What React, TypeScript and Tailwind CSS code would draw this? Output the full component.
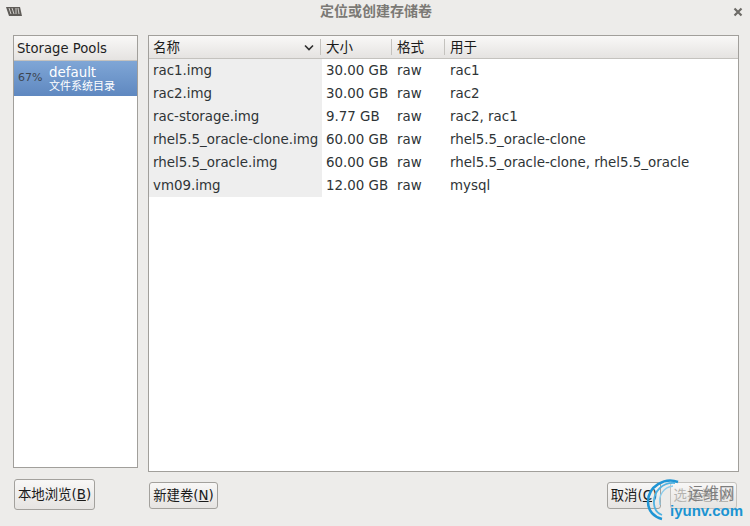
import React from "react";

const font = { fontFamily: '"DejaVu Sans", "Noto Sans CJK SC", sans-serif' };

const volumes = [
  { name: "rac1.img", size: "30.00 GB", format: "raw", usedBy: "rac1" },
  { name: "rac2.img", size: "30.00 GB", format: "raw", usedBy: "rac2" },
  { name: "rac-storage.img", size: "9.77 GB", format: "raw", usedBy: "rac2, rac1" },
  { name: "rhel5.5_oracle-clone.img", size: "60.00 GB", format: "raw", usedBy: "rhel5.5_oracle-clone" },
  { name: "rhel5.5_oracle.img", size: "60.00 GB", format: "raw", usedBy: "rhel5.5_oracle-clone, rhel5.5_oracle" },
  { name: "vm09.img", size: "12.00 GB", format: "raw", usedBy: "mysql" },
];

function Button({ label, mnemonic, className, disabled }: { label: string; mnemonic: string; className: string; disabled?: boolean }) {
  return (
    <button
      className={
        "h-[27px] rounded-[3px] border border-[#a3a19d] bg-gradient-to-b from-[#f8f7f6] to-[#e6e4e2] text-[13.4px] pt-[2px] flex items-center justify-center whitespace-nowrap " +
        (disabled ? "text-[#b5b3af] border-[#c4c2be] " : "text-[#1a1a1a] ") +
        className
      }
    >
      {label}(<span className="underline">{mnemonic}</span>)
    </button>
  );
}

export default function App() {
  return (
    <div className="relative w-[750px] h-[526px] overflow-hidden bg-[#edecea] text-[#2e3436] flex flex-col" style={font}>
      {/* title bar */}
      <div className="h-[24px] flex items-center justify-between pl-[6px] pr-[6px] shrink-0">
        <svg width="16" height="9" viewBox="0 0 16 9" className="mb-[1px]">
          <path d="M0 0h14l2 9H3z" fill="#5f5c58" />
          <path d="M3 1l2 6M6 1l2 6M10 1v6M12 1l1 6" stroke="#cfcdc9" strokeWidth="1" />
        </svg>
        <div className="text-[14px] font-bold text-[#7b7975] mr-[3px] mb-[1px]">定位或创建存储卷</div>
        <svg width="10" height="10" viewBox="0 0 10 10" className="mr-[1px]">
          <path d="M1.500 1.500l7 7M8.500 1.500l-7 7" stroke="#6d6b67" strokeWidth="2.200" />
        </svg>
      </div>

      <div className="flex flex-1 pl-[13px] pr-[11px] pt-[11px] gap-[10px]">
        {/* left column */}
        <div className="w-[125px] flex flex-col">
          <div className="h-[433px] border border-[#a19f9b] bg-white flex flex-col">
            <div className="h-[25px] px-[3px] pt-[1px] flex items-center text-[13.2px] text-[#1f1f1f] bg-gradient-to-b from-[#f9f8f7] to-[#e5e3e1] border-b border-[#c4c2be]">
              Storage Pools
            </div>
            <div className="h-[35px] flex items-center bg-gradient-to-b from-[#7fa6d6] to-[#5f88c0] text-white">
              <div className="w-[35px] pl-[4px] text-[11px] text-[#3d4550]">67%</div>
              <div className="flex flex-col leading-none">
                <div className="text-[13.400px] leading-[15px]">default</div>
                <div className="text-[11px] leading-[13px]">文件系统目录</div>
              </div>
            </div>
          </div>
          <Button label="本地浏览" mnemonic="B" className="w-[81px] !h-[31px] mt-[11px] ml-[1px]" />
        </div>

        {/* right column */}
        <div className="flex-1 flex flex-col min-w-0">
          <div className="h-[437px] border border-[#a19f9b] bg-white flex flex-col">
            <div className="h-[23px] flex items-center text-[13.500px] text-[#1a1a1a] bg-gradient-to-b from-[#f9f8f7] to-[#e5e3e1] border-b border-[#c4c2be] shrink-0">
              <div className="w-[172px] pl-[4px] pr-[6px] flex items-center justify-between border-r border-[#c4c2be] h-[16px]">
                <span>名称</span>
                <svg width="10" height="7" viewBox="0 0 10 7">
                  <path d="M1 1.500l4 4 4-4" fill="none" stroke="#2e2e2e" strokeWidth="1.600" />
                </svg>
              </div>
              <div className="w-[71px] pl-[5px] border-r border-[#c4c2be] h-[16px] flex items-center">大小</div>
              <div className="w-[53px] pl-[5px] border-r border-[#c4c2be] h-[16px] flex items-center">格式</div>
              <div className="pl-[5px]">用于</div>
            </div>
            {volumes.map((v) => (
              <div key={v.name} className="h-[23px] flex items-center text-[13.400px] text-[#2e3436] whitespace-nowrap">
                <div className="w-[173px] h-full pl-[4px] pt-[2px] flex items-center bg-[#eeeeee]">{v.name}</div>
                <div className="w-[71px] pl-[4px] pt-[2px]">{v.size}</div>
                <div className="w-[53px] pl-[4px] pt-[2px]">{v.format}</div>
                <div className="pl-[4px] pt-[2px]">{v.usedBy}</div>
              </div>
            ))}
          </div>
          <div className="flex items-center mt-[10px] pl-[1px] pr-[2px]">
            <Button label="新建卷" mnemonic="N" className="w-[69px]" />
            <Button label="取消" mnemonic="C" className="w-[54px] ml-auto" />
            <Button label="选择卷" mnemonic="V" disabled className="w-[67px] ml-[9px]" />
          </div>
        </div>
      </div>

      {/* watermark */}
      <div className="absolute left-[645px] top-[478px] w-[105px] h-[44px]">
        <svg width="50" height="44" viewBox="0 0 50 44" className="absolute left-0 top-0">
          <path d="M33 4C20 -1 3 8 3 24c0 9 6 15 14 17" fill="none" stroke="#1f95d4" strokeWidth="2.500" />
          <path d="M30 5C18 4 8 13 9 26c.4 5 3 9 8 11" fill="none" stroke="#4fb2e2" strokeWidth="1.800" />
          <path d="M28 8C19 9 13 17 15 27" fill="none" stroke="#8ccdec" strokeWidth="1.400" />
        </svg>
        <div className="absolute left-[43px] top-[6px] text-[15.500px] leading-[20px] text-[#7d7d7d] whitespace-nowrap">运维网</div>
        <div className="absolute left-[25px] top-[25px] text-[15px] leading-[16px] font-bold text-[#1b94d2] whitespace-nowrap" style={{ fontFamily: '"Liberation Sans", sans-serif' }}>iyunv.com</div>
      </div>
    </div>
  );
}
